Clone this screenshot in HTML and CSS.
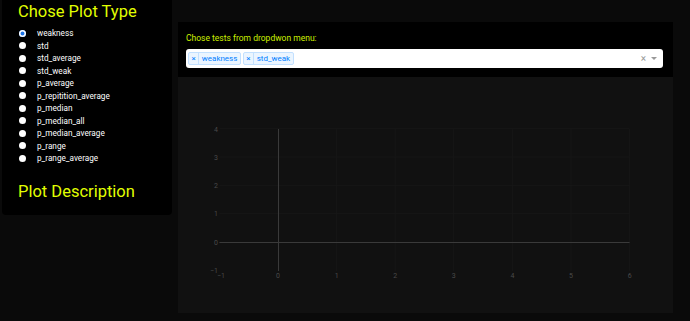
FILE: index.html
```html
<!DOCTYPE html>
<html lang="en">
<head>
  <meta charset="UTF-8">
  <title>Plot Viewer</title>
  <link rel="stylesheet" href="styles.css">
</head>
<body>
  <div class="page">
    <div class="sidebar">
      <h2 class="title">Chose Plot Type</h2>
      <div class="radio-list">
        <label class="radio-item"><input type="radio" name="plot" checked> weakness</label>
        <label class="radio-item"><input type="radio" name="plot"> std</label>
        <label class="radio-item"><input type="radio" name="plot"> std_average</label>
        <label class="radio-item"><input type="radio" name="plot"> std_weak</label>
        <label class="radio-item"><input type="radio" name="plot"> p_average</label>
        <label class="radio-item"><input type="radio" name="plot"> p_repitition_average</label>
        <label class="radio-item"><input type="radio" name="plot"> p_median</label>
        <label class="radio-item"><input type="radio" name="plot"> p_median_all</label>
        <label class="radio-item"><input type="radio" name="plot"> p_median_average</label>
        <label class="radio-item"><input type="radio" name="plot"> p_range</label>
        <label class="radio-item"><input type="radio" name="plot"> p_range_average</label>
      </div>
      <h2 class="title desc">Plot Description</h2>
    </div>

    <div class="main">
      <div class="picker">
        <div class="picker-label">Chose tests from dropdwon menu:</div>
        <div class="select">
          <div class="tags">
            <span class="tag"><span class="tag-x">×</span><span class="tag-text">weakness</span></span>
            <span class="tag"><span class="tag-x">×</span><span class="tag-text">std_weak</span></span>
          </div>
          <span class="clear">×</span>
          <span class="arrow"></span>
        </div>
      </div>

      <div class="plot">
        <svg width="495" height="236" viewBox="0 0 495 236">
          <g class="grid">
            <line x1="158.6" y1="52" x2="158.6" y2="194"/>
            <line x1="217.2" y1="52" x2="217.2" y2="194"/>
            <line x1="275.8" y1="52" x2="275.8" y2="194"/>
            <line x1="334.4" y1="52" x2="334.4" y2="194"/>
            <line x1="393" y1="52" x2="393" y2="194"/>
            <line x1="451.6" y1="52" x2="451.6" y2="194"/>
            <line x1="41.4" y1="136.7" x2="451.6" y2="136.7"/>
            <line x1="41.4" y1="108.4" x2="451.6" y2="108.4"/>
            <line x1="41.4" y1="80.1" x2="451.6" y2="80.1"/>
            <line x1="41.4" y1="51.8" x2="451.6" y2="51.8"/>
          </g>
          <g class="zero">
            <line x1="100.5" y1="52" x2="100.5" y2="194"/>
            <line x1="41.4" y1="165.5" x2="451.6" y2="165.5"/>
          </g>
          <g class="ticks ytick">
            <text x="40" y="54.5">4</text>
            <text x="40" y="82.8">3</text>
            <text x="40" y="111.1">2</text>
            <text x="40" y="139.4">1</text>
            <text x="40" y="167.7">0</text>
            <text x="40" y="196">−1</text>
          </g>
          <g class="ticks xtick">
            <text x="43" y="201">−1</text>
            <text x="100" y="201">0</text>
            <text x="158.6" y="201">1</text>
            <text x="217.2" y="201">2</text>
            <text x="275.8" y="201">3</text>
            <text x="334.4" y="201">4</text>
            <text x="393" y="201">5</text>
            <text x="451.6" y="201">6</text>
          </g>
        </svg>
      </div>
    </div>
  </div>
</body>
</html>
```

FILE: styles.css
```css
/* page */
body {
  margin: 0;
  background: #0a0a0a;
  font-family: Roboto, "Liberation Sans", sans-serif;
}
.page {
  display: flex;
  align-items: flex-start;
  padding-left: 2px;
}

/* left column */
.sidebar {
  width: 154px;
  padding: 0 0 11px 16px;
  background: #000;
  border-radius: 0 0 4px 4px;
}
.title {
  margin: 0;
  font-size: 16.5px;
  font-weight: 400;
  line-height: 24px;
  color: #e1ff00;
}
.desc {
  margin-top: 15px;
}
.radio-list {
  display: flex;
  flex-direction: column;
  margin-top: 3px;
}
.radio-item {
  display: flex;
  align-items: center;
  height: 12.5px;
  font-size: 8.2px;
  color: #fff;
}
.radio-item input {
  appearance: none;
  width: 7px;
  height: 7px;
  margin: 0 11px 0 1px;
  border-radius: 50%;
  background: #fff;
}
.radio-item input:checked {
  background: #1a73e8;
  box-shadow: inset 0 0 0 1.5px #fff;
}

/* right column */
.main {
  width: 495px;
  margin: 22px 0 0 6px;
}
.picker {
  background: #000;
  padding: 11px 10px 9px 8px;
}
.picker-label {
  font-size: 8.5px;
  color: #ccf000;
  margin-bottom: 5px;
  line-height: 11px;
}
.select {
  display: flex;
  align-items: center;
  height: 19px;
  padding: 0 6px 0 2px;
  background: #fff;
  border-radius: 3px;
}
.tags {
  display: flex;
  flex: 1;
  gap: 2px;
}
.tag {
  display: flex;
  height: 13px;
  font-size: 8px;
  line-height: 11px;
  color: #007eff;
  background: #ebf5ff;
  border: 1px solid #c2e0ff;
  border-radius: 2px;
  box-sizing: border-box;
}
.tag-x {
  padding: 0 2.5px;
  border-right: 1px solid #c2e0ff;
}
.tag-text {
  padding: 0 2.5px;
}
.clear {
  font-size: 10px;
  color: #999;
  margin-right: 5px;
}
.arrow {
  width: 0;
  height: 0;
  border-top: 3px solid #999;
  border-left: 3px solid transparent;
  border-right: 3px solid transparent;
}
.plot {
  height: 236px;
  background: #111;
}
.plot svg {
  display: block;
}
.grid line {
  stroke: #171717;
  stroke-width: 1;
}
.zero line {
  stroke: #3a3a3a;
  stroke-width: 1;
}
.ticks text {
  font-family: Roboto, "Liberation Sans", sans-serif;
  font-size: 7px;
  fill: #4a4a4a;
}
.ytick text {
  text-anchor: end;
}
.xtick text {
  text-anchor: middle;
}
```
